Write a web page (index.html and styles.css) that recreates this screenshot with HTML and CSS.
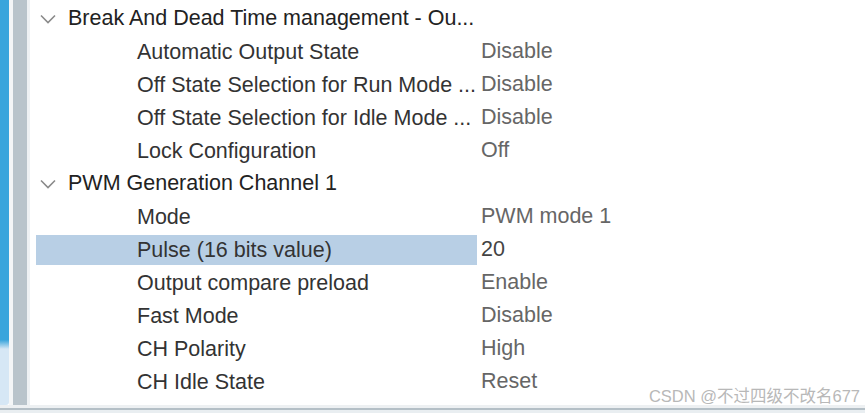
FILE: index.html
```html
<!DOCTYPE html>
<html lang="en">
<head>
  <meta charset="UTF-8" />
  <title>Parameter Settings</title>
  <link rel="stylesheet" href="styles.css">
</head>
<body>
  <div class="frame">
    <div class="side">
      <div class="side-blue"></div>
      <div class="side-gap"></div>
      <div class="side-bar"></div>
      <div class="side-edge"></div>
    </div>
    <div class="panel">
      <div class="row group">
        <svg class="chev" width="16" height="10" viewBox="0 0 16 10"><path d="M1 1.5 L8 8.5 L15 1.5" fill="none" stroke="#8a8a8a" stroke-width="1.6"/></svg>
        <span class="group-name">Break And Dead Time management - Ou...</span>
      </div>
      <div class="row item"><span class="label">Automatic Output State</span><span class="value">Disable</span></div>
      <div class="row item"><span class="label">Off State Selection for Run Mode ...</span><span class="value">Disable</span></div>
      <div class="row item"><span class="label">Off State Selection for Idle Mode ...</span><span class="value">Disable</span></div>
      <div class="row item"><span class="label">Lock Configuration</span><span class="value">Off</span></div>
      <div class="row group">
        <svg class="chev" width="16" height="10" viewBox="0 0 16 10"><path d="M1 1.5 L8 8.5 L15 1.5" fill="none" stroke="#8a8a8a" stroke-width="1.6"/></svg>
        <span class="group-name">PWM Generation Channel 1</span>
      </div>
      <div class="row item"><span class="label">Mode</span><span class="value">PWM mode 1</span></div>
      <div class="row item selected"><span class="label">Pulse (16 bits value)</span><span class="value edit">20</span></div>
      <div class="row item"><span class="label">Output compare preload</span><span class="value">Enable</span></div>
      <div class="row item"><span class="label">Fast Mode</span><span class="value">Disable</span></div>
      <div class="row item"><span class="label">CH Polarity</span><span class="value">High</span></div>
      <div class="row item"><span class="label">CH Idle State</span><span class="value">Reset</span></div>
    </div>
  </div>
  <div class="bottom"></div>
  <div class="watermark">CSDN @不过四级不改名677</div>
</body>
</html>
```

FILE: styles.css
```css
body {
  margin: 0;
  width: 865px;
  height: 413px;
  overflow: hidden;
  background: #ffffff;
  font-family: "Liberation Sans", Arial, sans-serif;
  position: relative;
}
.frame {
  display: flex;
  height: 405px;
}
.side {
  display: flex;
  height: 100%;
}
.side-blue {
  width: 9px;
  background: linear-gradient(#3aa5dc 0, #3aa5dc 340px, #d6e7f5 349px);
  border-bottom-right-radius: 3px;
}
.side-gap {
  width: 4px;
  background: #f4f6f7;
}
.side-bar {
  width: 14px;
  background: #b9c4cb;
}
.side-edge {
  width: 3px;
  background: #eef1f3;
}
.panel {
  flex: 1;
  padding-top: 2px;
  padding-left: 6px;
}
.row {
  height: 33px;
  display: flex;
  align-items: center;
  font-size: 21.5px;
  white-space: nowrap;
}
.group {
  color: #222222;
}
.chev {
  margin-left: 4px;
  margin-right: 12px;
}
.item .label {
  box-sizing: border-box;
  width: 441px;
  height: 30px;
  line-height: 30px;
  padding-left: 101px;
  color: #333333;
  overflow: hidden;
}
.item .value {
  padding-left: 4px;
  color: #666666;
}
.selected .label {
  background: #b8cfe5;
}
.value.edit {
  color: #444444;
}
.bottom {
  height: 8px;
  background: linear-gradient(#edf0f2 0, #edf0f2 3px, #b4bfc6 3px, #b4bfc6 5px, #e9eef1 5px);
}
.watermark {
  position: absolute;
  right: 5px;
  bottom: 6px;
  font-size: 16.5px;
  color: #b8b8b8;
  font-family: "Liberation Sans", "Noto Sans CJK SC", sans-serif;
}
```
